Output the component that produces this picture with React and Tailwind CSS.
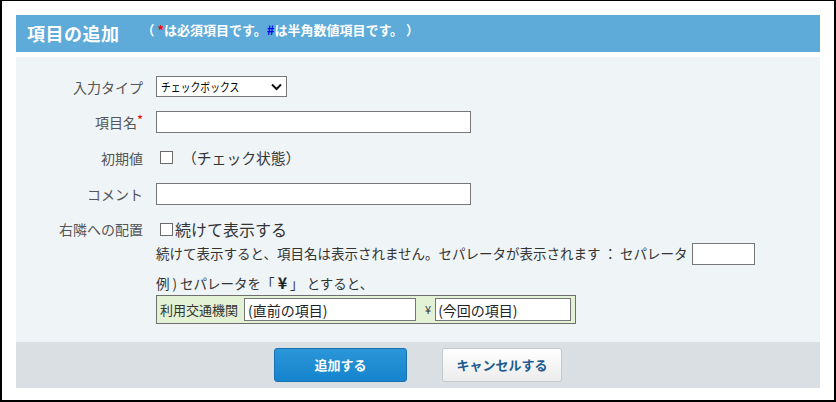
import React from "react";

const FONT = { fontFamily: '"Noto Sans CJK JP", "Noto Sans", sans-serif' };

function Box({ className = "" }) {
  return <span className={"inline-block w-[13px] h-[13px] border border-[#6b6b6b] bg-white shrink-0 " + className} />;
}

function Label({ children, className = "" }) {
  return (
    <div className={"w-[127px] text-right text-[14px] text-[#555] leading-none shrink-0 " + className}>
      {children}
    </div>
  );
}

export default function App() {
  return (
    <div style={FONT} className="w-[836px] h-[402px] bg-white border-t border-l-2 border-r-2 border-b-2 border-black pt-[14px] px-[14px]">
      <div className="h-[37px] bg-[#5eaad9] flex items-start pl-[11px]">
        <span className="text-white font-bold text-[18px] leading-none mt-[9px] tracking-[0.5px]">項目の追加</span>
        <span className="text-white font-bold text-[13px] leading-none mt-[8px] ml-[22px] whitespace-pre">
          （ <span className="text-[#ff0000]">*</span>は必須項目です。<span className="text-[#0000ee]">#</span>は半角数値項目です。 ）
        </span>
      </div>
      <div className="mt-[5px] bg-[#eff4f7] pt-[19px] pb-[18px] flex flex-col">
        <div className="flex items-center h-[21px]">
          <Label>入力タイプ</Label>
          <div className="ml-[13px] w-[131px] h-[21px] border border-[#767676] bg-white flex items-center justify-between pl-[4px] pr-[4px]">
            <span className="inline-block text-[12px] text-black leading-none scale-x-[0.82] origin-left whitespace-nowrap">チェックボックス</span>
            <svg width="11" height="8" viewBox="0 0 11 8">
              <path d="M1 1.5 L5.5 6 L10 1.5" fill="none" stroke="#111" strokeWidth="2" />
            </svg>
          </div>
        </div>
        <div className="flex items-center h-[22px] mt-[14px]">
          <Label>項目名<span className="text-[#e00] text-[13px] relative -top-[3px]">*</span></Label>
          <div className="ml-[13px] w-[315px] h-[22px] border border-[#767676] bg-white" />
        </div>
        <div className="flex items-center h-[22px] mt-[14px]">
          <Label>初期値</Label>
          <div className="ml-[17px] flex items-center">
            <Box />
            <span className="ml-[9px] text-[14.8px] text-[#333] leading-none">（チェック状態）</span>
          </div>
        </div>
        <div className="flex items-center h-[22px] mt-[14px]">
          <Label>コメント</Label>
          <div className="ml-[13px] w-[315px] h-[22px] border border-[#767676] bg-white" />
        </div>
        <div className="flex mt-[14px]">
          <Label className="pt-[3px]">右隣への配置</Label>
          <div className="ml-[13px] flex flex-col">
            <div className="flex items-center h-[20px] pl-[4px]">
              <Box />
              <span className="ml-[2px] text-[16px] text-[#333] leading-none">続けて表示する</span>
            </div>
            <div className="flex items-center h-[22px] mt-[4px] text-[13.5px] text-[#333]">
              <span className="leading-none whitespace-nowrap">続けて表示すると、項目名は表示されません。セパレータが表示されます ： セパレータ</span>
              <div className="ml-[4px] w-[63px] h-[22px] border border-[#767676] bg-white shrink-0" />
            </div>
            <div className="flex items-center h-[20px] mt-[7px] text-[13.5px] text-[#333]">
              <span className="leading-none whitespace-pre">例 ) セパレータを「 <b className="text-[16px] text-[#222]">¥</b> 」 とすると、</span>
            </div>
            <div className="mt-[3px] w-[420px] h-[29px] border border-[#6f6f6f] bg-[#e3f1d4] flex items-center pl-[3px]">
              <span className="text-[13px] text-[#333] leading-none">利用交通機関</span>
              <div className="ml-[6px] w-[172px] h-[23px] border border-[#767676] bg-white flex items-center pl-[3px]">
                <span className="text-[14px] text-[#222] leading-none">(直前の項目)</span>
              </div>
              <span className="ml-[9px] text-[11px] text-[#333] leading-none">¥</span>
              <div className="ml-[4px] w-[136px] h-[23px] border border-[#767676] bg-white flex items-center pl-[2px]">
                <span className="text-[14px] text-[#222] leading-none">(今回の項目)</span>
              </div>
            </div>
          </div>
        </div>
      </div>
      <div className="h-[46px] bg-[#d9dfe3] flex items-center justify-center gap-[35px]">
        <button className="w-[133px] h-[34px] rounded-[3px] border border-[#1a70b0] bg-gradient-to-b from-[#2b96d8] to-[#1484cd] text-white font-bold text-[13px]">
          追加する
        </button>
        <button className="w-[120px] h-[34px] rounded-[3px] border border-[#c4c9cc] bg-gradient-to-b from-white to-[#ececec] text-[#1d5a90] font-bold text-[13px]">
          キャンセルする
        </button>
      </div>
    </div>
  );
}
